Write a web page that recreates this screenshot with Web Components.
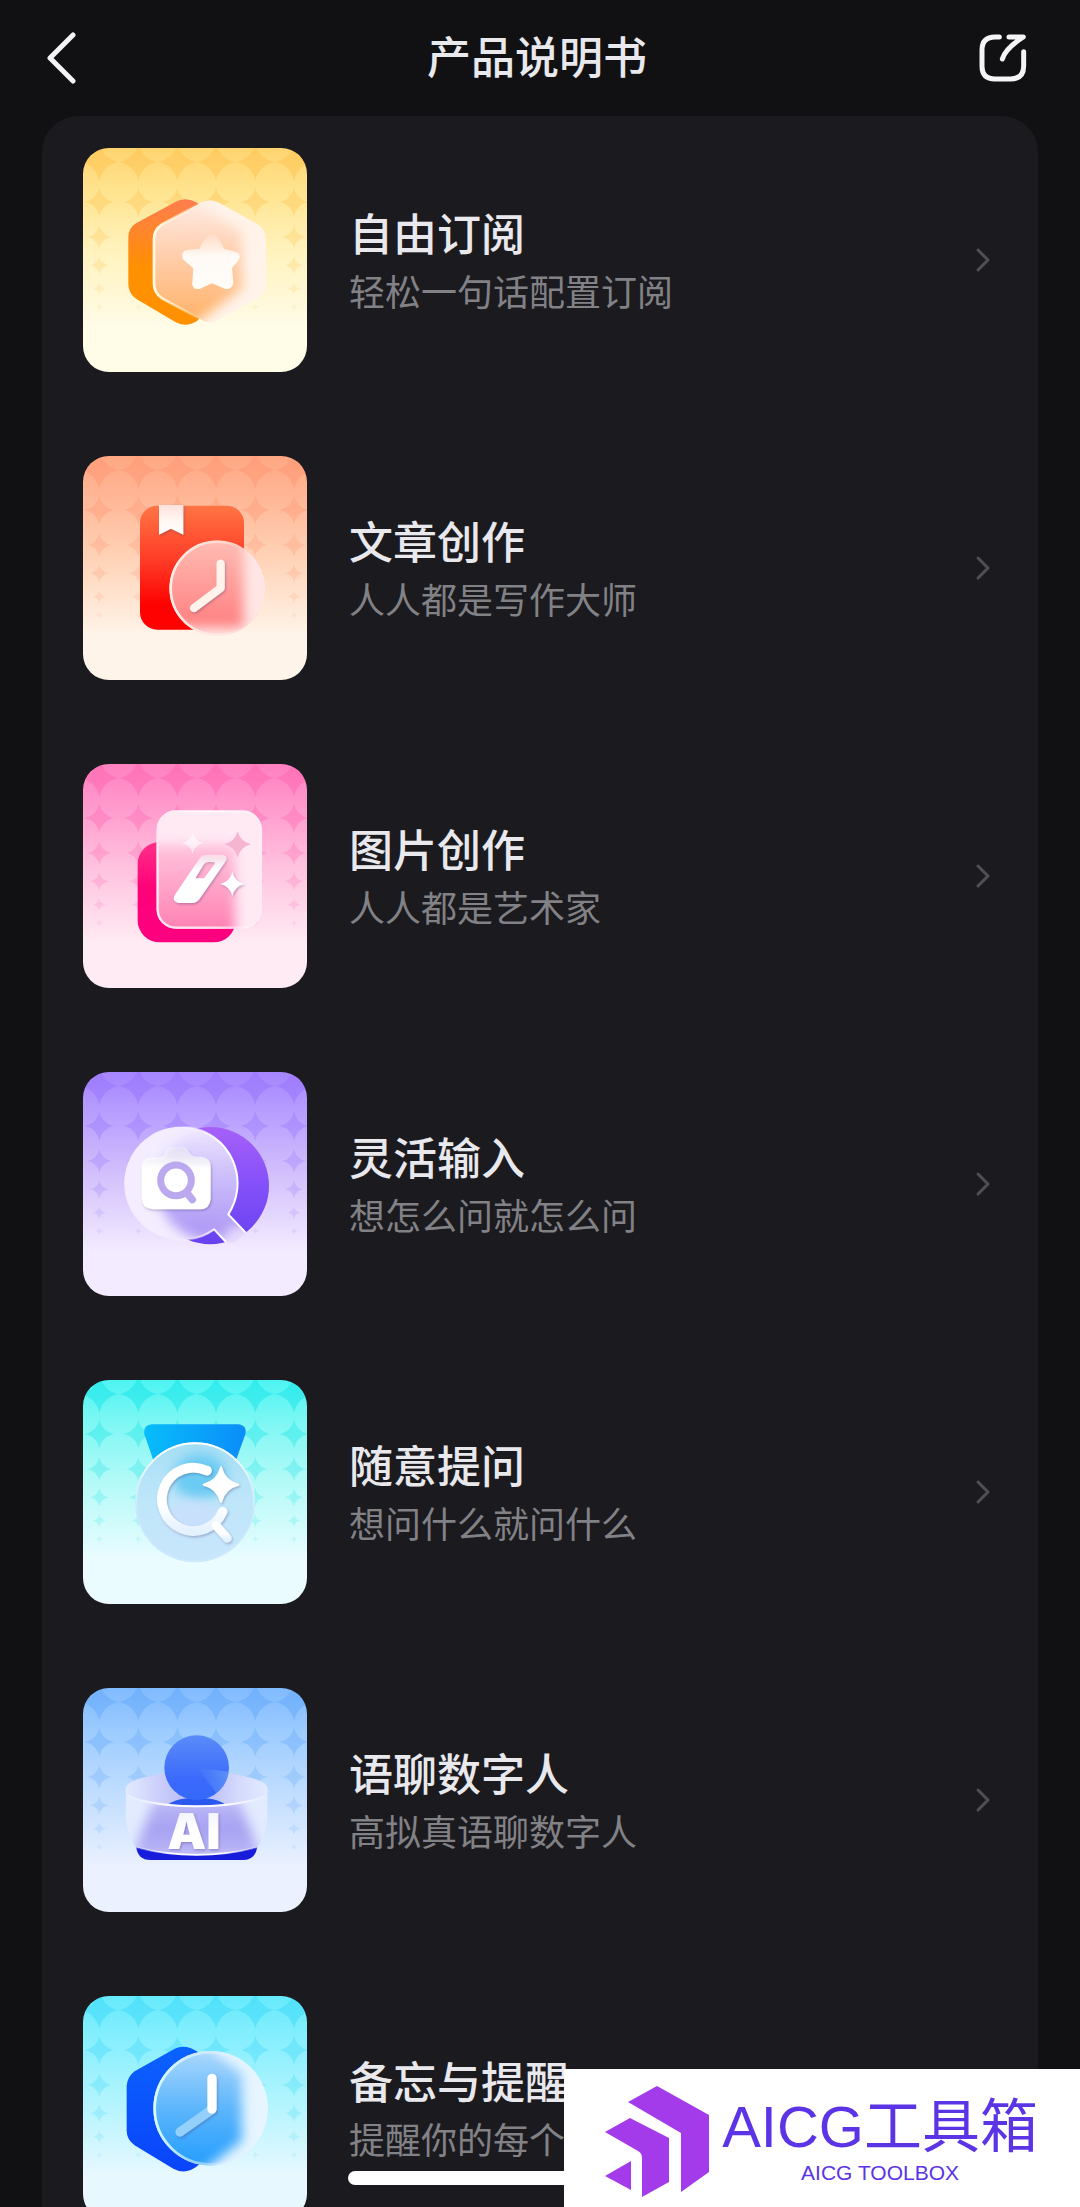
<!DOCTYPE html>
<html lang="zh-CN">
<head>
<meta charset="UTF-8">
<meta name="viewport" content="width=device-width, initial-scale=1">
<title>产品说明书</title>
<style>
  body {
    margin: 0;
    background: #111113;
    color: #e8e8ed;
    font-family: "Noto Sans CJK SC", sans-serif;
  }
</style>
</head>
<body>
<manual-page>
  <nav-bar slot="header">产品说明书</nav-bar>
  <feature-row icon="subscribe">自由订阅<span slot="desc">轻松一句话配置订阅</span></feature-row>
  <feature-row icon="article">文章创作<span slot="desc">人人都是写作大师</span></feature-row>
  <feature-row icon="image">图片创作<span slot="desc">人人都是艺术家</span></feature-row>
  <feature-row icon="input">灵活输入<span slot="desc">想怎么问就怎么问</span></feature-row>
  <feature-row icon="ask">随意提问<span slot="desc">想问什么就问什么</span></feature-row>
  <feature-row icon="avatar">语聊数字人<span slot="desc">高拟真语聊数字人</span></feature-row>
  <feature-row icon="remind">备忘与提醒<span slot="desc">提醒你的每个</span></feature-row>
  <brand-badge slot="overlay">AICG工具箱<span slot="sub">AICG TOOLBOX</span></brand-badge>
</manual-page>

<script>
// stars that stay visible between the overlapping dots of the tile background
const starColumns = [49, 166, 283, 399, 517, 633]
const starRows = [
  { y: 42, r: 58, o: 0.9 },
  { y: 162, r: 44, o: 0.7 },
  { y: 267, r: 36, o: 0.55 },
  { y: 352, r: 28, o: 0.45 },
  { y: 422, r: 19, o: 0.35 },
  { y: 477, r: 11, o: 0.25 },
]

const gapStar = (x, y, r) => {
  const arc = Math.round(r * 1.2)
  return `M${x} ${y - r}A${arc} ${arc} 0 0 0 ${x + r} ${y}A${arc} ${arc} 0 0 0 ${x} ${y + r}A${arc} ${arc} 0 0 0 ${x - r} ${y}A${arc} ${arc} 0 0 0 ${x} ${y - r}Z`
}

const sparkle = (x, y, r) => {
  const k = Math.round(r / 5)
  return `M${x} ${y - r}Q${x + k} ${y - k} ${x + r} ${y}Q${x + k} ${y + k} ${x} ${y + r}Q${x - k} ${y + k} ${x - r} ${y}Q${x - k} ${y - k} ${x} ${y - r}Z`
}

const gradient = (id, stops, direction = 'x1="0" y1="0" x2="0" y2="1"') =>
  `<linearGradient id="${id}" ${direction}>${stops
    .map(([offset, color, opacity = 1]) => `<stop offset="${offset}" stop-color="${color}" stop-opacity="${opacity}"/>`)
    .join("")}</linearGradient>`

const leftToRight = 'x1="0" y1="0" x2="1" y2="0"'

const icons = {
  subscribe: {
    top: 28,
    star: "#ffc04e",
    bg: ["#ffd470", "#ffe490", "#fff2bc", "#fffce8"],
    art: `
      <defs>
        ${gradient("back", [[0, "#ff7d4f"], [0.55, "#ff9000"], [1, "#ff9000"]])}
        ${gradient("tint", [[0, "#ffeae2"], [0.4, "#ffd0b0"], [1, "#ffb062"]])}
        ${gradient("rim", [[0, "#fffbe2"], [0.45, "#fffbe2", 0]], leftToRight)}
        ${gradient("star", [[0, "#fff", 0.1], [0.4, "#fff", 0.9], [1, "#fffdf8"]])}
        <clipPath id="glass"><path d="M397 190Q420 180 443 190L565 258Q588 274 588 300V435Q588 462 565 478L443 545Q420 558 397 545L275 478Q252 462 252 435V300Q252 274 275 258Z"/></clipPath>
      </defs>
      <path fill="url(#back)" d="M316 190Q348 172 382 192L420 240V500L382 546Q348 568 316 550L198 480Q175 464 175 436V296Q175 268 198 254Z"/>
      <g clip-path="url(#glass)">
        <rect x="240" y="170" width="360" height="390" fill="#fff3ea"/>
        <path filter="url(#soft)" fill="url(#tint)" d="M230 250L370 190L515 280V450L370 560L230 540Z"/>
      </g>
      <path fill="none" stroke="url(#rim)" stroke-width="8" d="M397 190Q420 180 443 190L565 258Q588 274 588 300V435Q588 462 565 478L443 545Q420 558 397 545L275 478Q252 462 252 435V300Q252 274 275 258Z"/>
      <path fill="url(#star)" d="M398 312Q426 260 453 312L462 330L498 340Q518 350 503 368L486 388L490 430Q488 456 464 450L426 434L388 451Q364 454 367 430L370 389L339 362Q330 338 352 334L388 330Z"/>`,
  },

  article: {
    top: 36,
    star: "#ff9470",
    bg: ["#ffa782", "#ffb898", "#ffd2b6", "#fff4e9"],
    art: `
      <defs>
        ${gradient("back", [[0, "#ff7544"], [0.45, "#ff3a26"], [0.8, "#fe0202"]])}
        ${gradient("mark", [[0, "#ffe0dc"], [0.5, "#fff6f2"], [1, "#fff"]])}
        ${gradient("tint", [[0, "#ffc4b8"], [0.55, "#ff9d9a"], [1, "#ff7f80"]])}
        ${gradient("rim", [[0, "#fff0e8"], [0.6, "#fff0e8", 0.5], [0.8, "#fff0e8", 0]], leftToRight)}
        <clipPath id="glass"><circle cx="442" cy="433" r="143"/></clipPath>
      </defs>
      <rect x="210" y="185" width="312" height="372" rx="52" fill="url(#back)"/>
      <path fill="url(#mark)" filter="url(#drop)" d="M267 183H340V272L303 254L267 272Z"/>
      <g clip-path="url(#glass)">
        <rect x="296" y="288" width="290" height="290" fill="#ffe6e4"/>
        <rect x="270" y="260" width="250" height="290" filter="url(#soft)" fill="url(#tint)"/>
      </g>
      <circle cx="442" cy="433" r="140" fill="none" stroke="url(#rim)" stroke-width="8"/>
      <path filter="url(#drop)" fill="none" stroke="#fff3ec" stroke-width="25" stroke-linecap="round" stroke-linejoin="round" d="M452 359V432L372 492"/>`,
  },

  image: {
    top: 28,
    star: "#ff62ae",
    bg: ["#ff80c0", "#ff9bcd", "#ffc0de", "#ffebf3"],
    art: `
      <defs>
        ${gradient("back", [[0, "#ff3088"], [0.45, "#fe0279"], [1, "#fe0080"]])}
        ${gradient("tint", [[0, "#ffc4dc"], [1, "#ff78ae"]])}
        ${gradient("rim", [[0, "#ffe6f2"], [0.6, "#fff", 0.7], [1, "#fff", 0.1]], leftToRight)}
        ${gradient("wand", [[0, "#fff", 0.5], [0.3, "#fff"], [1, "#fff"]])}
        <clipPath id="glass"><rect x="260" y="167" width="316" height="355" rx="58"/></clipPath>
      </defs>
      <rect x="203" y="262" width="294" height="301" rx="66" fill="url(#back)"/>
      <g clip-path="url(#glass)">
        <rect x="260" y="167" width="318" height="357" fill="#ffeaf4"/>
        <rect x="230" y="270" width="265" height="290" filter="url(#soft)" fill="url(#tint)"/>
      </g>
      <rect x="263" y="170" width="310" height="349" rx="55" fill="none" stroke="url(#rim)" stroke-width="7"/>
      <path filter="url(#drop)" fill="url(#wand)" fill-rule="evenodd" d="M412 300H455Q478 304 465 323L388 434Q380 445 366 445H326Q304 440 315 420L388 312Q397 300 412 300ZM414 322Q406 322 400 331L376 371H402L434 328Q437 322 430 322Z"/>
      <path fill="#f5b5d0" d="${sparkle(503, 269, 40)}"/>
      <path fill="#fff" filter="url(#drop)" d="${sparkle(487, 388, 36)}"/>
      <path fill="#fff" fill-opacity=".6" d="${sparkle(368, 265, 32)}"/>`,
  },

  input: {
    top: 38,
    star: "#9470fb",
    bg: ["#a685ff", "#b9a0ff", "#d2bffc", "#f3ebff"],
    art: `
      <defs>
        ${gradient("back", [[0, "#a660f8"], [0.5, "#8450fa"], [1, "#6842ee"]])}
        ${gradient("tint", [[0, "#ece4ff"], [0.4, "#cdbffb"], [1, "#ab94f5"]])}
        ${gradient("rim", [[0.4, "#fff", 0], [0.8, "#fff"]], leftToRight)}
        ${gradient("camera", [[0, "#fff", 0.3], [0.35, "#fff"], [1, "#fff"]])}
        <clipPath id="glass"><path d="M475 465L527 520L494 551L468 548L432 510A170 170 0 1 1 475 465Z"/></clipPath>
      </defs>
      <circle cx="421" cy="379" r="176" fill="url(#back)"/>
      <g clip-path="url(#glass)">
        <rect x="150" y="190" width="380" height="370" fill="#f3edff"/>
        <circle cx="425" cy="378" r="165" filter="url(#soft)" fill="url(#tint)"/>
        <path d="M462 520L500 500L540 530L500 565Z" filter="url(#soft)" fill="#e6dafb"/>
      </g>
      <path fill="none" stroke="url(#rim)" stroke-width="6" d="M468 548L432 510A170 170 0 1 1 475 465L527 520"/>
      <path filter="url(#drop)" fill="url(#camera)" d="M245 294H270Q282 292 287 276Q293 262 306 262H338Q350 262 355 274Q362 290 380 292H394Q422 294 422 322V418Q420 449 390 450H248Q216 448 215 416V324Q216 297 245 294Z"/>
      <circle cx="318" cy="363" r="46" fill="#fff" stroke="#bba8ee" stroke-width="21"/>
      <path stroke="#bba8ee" stroke-width="22" stroke-linecap="round" d="M350 400L367 421"/>`,
  },

  ask: {
    top: 29,
    star: "#12e2e6",
    bg: ["#4df4f2", "#80f7f4", "#b2faf7", "#eafcff"],
    art: `
      <defs>
        ${gradient("back", [[0, "#08bdfa"], [1, "#0b8dfa"]], leftToRight)}
        ${gradient("disc", [[0, "#a6dff5"], [0.5, "#bfe6fa"], [1, "#c8e6fc"]])}
        ${gradient("rim", [[0, "#fff"], [0.6, "#fff", 0.1]])}
        ${gradient("ring", [[0, "#fff"], [0.6, "#fff"], [1, "#e4f2ff"]])}
        <clipPath id="glass"><circle cx="375" cy="396" r="180"/></clipPath>
      </defs>
      <path fill="url(#back)" d="M245 162H503Q532 164 526 192L498 270H250L223 192Q218 165 245 162Z"/>
      <circle cx="375" cy="396" r="180" fill="url(#disc)"/>
      <g clip-path="url(#glass)">
        <ellipse cx="390" cy="320" rx="80" ry="70" filter="url(#soft)" fill="#6ccbf3"/>
        <ellipse cx="370" cy="440" rx="80" ry="50" filter="url(#soft)" fill="#c8e0fc"/>
      </g>
      <circle cx="375" cy="396" r="177" fill="none" stroke="url(#rim)" stroke-width="6"/>
      <g filter="url(#drop)" fill="none" stroke="url(#ring)" stroke-linecap="round">
        <path stroke-width="29" d="M411 301A95 95 0 1 0 458 424"/>
        <path stroke-width="26" d="M438 465L472 504"/>
      </g>
      <path fill="#fff" stroke="#fff" stroke-width="6" stroke-linejoin="round" filter="url(#drop)" d="${sparkle(453, 343, 52)}"/>`,
  },

  avatar: {
    top: 39,
    star: "#5fa6f8",
    bg: ["#80baff", "#9dccff", "#bedcff", "#ebf1ff"],
    art: `
      <defs>
        ${gradient("head", [[0, "#5a8cf8"], [0.7, "#3b69fc"], [1, "#3468f8"]])}
        ${gradient("shine", [[0, "#6fa6f4", 0], [1, "#6fa6f4", 0.6]], leftToRight)}
        ${gradient("top", [[0, "#e2ebff"], [0.2, "#cfd2fb"], [0.5, "#b1b5f6"], [0.8, "#d5dafc"], [1, "#e2ebff"]], leftToRight)}
        ${gradient("tint", [[0, "#c0bdf7"], [0.5, "#a6a1f2"], [1, "#bdb9f6"]])}
        ${gradient("rim", [[0, "#fff", 0.2], [0.3, "#fff"], [0.7, "#fff"], [1, "#fff", 0.2]], leftToRight)}
        ${gradient("word", [[0, "#eceeff"], [0.5, "#fff"], [1, "#fff"]])}
        <clipPath id="glass"><path d="M167 345A213 49 0 0 0 593 345V420Q590 480 562 517Q380 562 198 517Q170 480 167 420Z"/></clipPath>
        <clipPath id="inside"><path d="M167 200H593V345A213 49 0 0 1 167 345Z"/></clipPath>
      </defs>
      <ellipse cx="380" cy="342" rx="213" ry="52" fill="url(#top)"/>
      <g clip-path="url(#inside)">
        <ellipse cx="380" cy="396" rx="88" ry="28" fill="#2b58ee"/>
      </g>
      <circle cx="380" cy="278" r="97" fill="url(#head)"/>
      <path fill="url(#shine)" d="M380 278L476 290A97 97 0 0 1 440 354Z"/>
      <path fill="#181ddb" d="M198 512Q202 555 242 555H520Q558 553 562 512Z"/>
      <g clip-path="url(#glass)">
        <rect x="160" y="340" width="440" height="220" fill="#e2ebff"/>
        <path filter="url(#soft)" fill="url(#tint)" d="M255 370H505L575 550H185Z"/>
      </g>
      <path fill="none" stroke="url(#rim)" stroke-width="6" d="M167 345A213 49 0 0 0 593 345"/>
      <path fill="none" stroke="url(#rim)" stroke-width="5" d="M198 517Q380 562 562 517"/>
      <text x="292" y="522" filter="url(#drop)" fill="url(#word)" font-family="Inter, sans-serif" font-size="147" font-weight="900">AI</text>`,
  },

  remind: {
    top: 46,
    star: "#38d6f8",
    bg: ["#66eafc", "#88effe", "#aef4fe", "#e8f8ff"],
    art: `
      <defs>
        ${gradient("back", [[0, "#0b62ff"], [1, "#0a44fa"]])}
        ${gradient("tint", [[0, "#b4dcfc"], [0.5, "#5bb5fc"], [1, "#1c9afe"]])}
        ${gradient("rim", [[0, "#d8fbff"], [0.5, "#fff", 0.3], [0.7, "#fff", 0]], leftToRight)}
        <clipPath id="glass"><circle cx="422" cy="383" r="172"/></clipPath>
      </defs>
      <path fill="url(#back)" d="M314 204Q346 188 384 214L420 240V520L382 556Q348 584 310 564L194 494Q170 476 170 450V315Q172 288 194 272Z"/>
      <g clip-path="url(#glass)">
        <rect x="250" y="210" width="350" height="350" fill="#e6f5ff"/>
        <path filter="url(#soft)" fill="url(#tint)" d="M230 200L400 190L515 280V480L400 570L230 580Z"/>
      </g>
      <circle cx="422" cy="383" r="168" fill="none" stroke="url(#rim)" stroke-width="8"/>
      <g filter="url(#drop)" fill="none" stroke-width="28" stroke-linecap="round">
        <path stroke="#94d0fc" d="M425 387L330 454"/>
        <path stroke="#fff" d="M426 293V385"/>
      </g>`,
  },
}

class FeatureIcon extends HTMLElement {
  constructor() {
    super()
    this.attachShadow({ mode: "open" })
  }

  connectedCallback() {
    const icon = icons[this.getAttribute("name")]
    const [c0, c1, c2, c3] = icon.bg
    this.shadowRoot.innerHTML = `
    <style>
      :host {
        display: block;
        flex: none;
        width: 224px;
        height: 224px;
        border-radius: 26px;
        overflow: hidden;
      }

      svg {
        display: block;
        width: 100%;
        height: 100%;
      }
    </style>
    <svg viewBox="0 0 672 672" aria-hidden="true">
      <defs>
        ${gradient("bg", [[0, c0], [0.2, c1], [0.45, c2], [0.8, c3], [1, c3]])}
        <filter id="soft" x="-30%" y="-30%" width="160%" height="160%"><feGaussianBlur stdDeviation="17"/></filter>
        <filter id="drop" x="-30%" y="-30%" width="160%" height="160%"><feDropShadow dx="3" dy="4" stdDeviation="3" flood-color="#40306a" flood-opacity=".35"/></filter>
      </defs>
      <rect width="672" height="672" fill="url(#bg)"/>
      ${starRows
        .map(({ y, r, o }) => `<path fill="${icon.star}" opacity="${o / 2}" d="${starColumns.map((x) => gapStar(x, y, r)).join("")}"/>`)
        .join("")}
      <g transform="translate(-39 ${-icon.top})">${icon.art}</g>
    </svg>
  `
  }
}

class FeatureRow extends HTMLElement {
  constructor() {
    super()
    this.attachShadow({ mode: "open" })
    this.shadowRoot.innerHTML = `
    <style>
      :host {
        display: block;
      }

      a {
        display: flex;
        align-items: center;
        gap: 42px;
        color: inherit;
        text-decoration: none;
      }

      .text {
        flex: 1;
        min-width: 0;
      }

      .title {
        font-size: 44px;
        font-weight: 500;
        line-height: 60px;
      }

      .desc {
        color: #828286;
        font-size: 36px;
        line-height: 56px;
      }

      .arrow {
        flex: none;
        width: 16px;
        height: 26px;
      }
    </style>
    <a href="#${this.getAttribute("icon")}">
      <feature-icon name="${this.getAttribute("icon")}"></feature-icon>
      <div class="text">
        <div class="title"><slot></slot></div>
        <div class="desc"><slot name="desc"></slot></div>
      </div>
      <svg class="arrow" viewBox="0 0 16 26" aria-hidden="true">
        <path d="M3 3L13 13L3 23" fill="none" stroke="#505054" stroke-width="3" stroke-linecap="round" stroke-linejoin="round"/>
      </svg>
    </a>
  `
  }
}

class NavBar extends HTMLElement {
  constructor() {
    super()
    this.attachShadow({ mode: "open" })
    this.shadowRoot.innerHTML = `
    <style>
      :host {
        display: flex;
        align-items: center;
        justify-content: space-between;
        height: 116px;
        padding: 0 52px 0 46px;
      }

      h1 {
        margin: 0 0 6px;
        font-size: 44px;
        font-weight: 500;
        line-height: 60px;
      }

      button {
        display: flex;
        width: 52px;
        height: 52px;
        padding: 0;
        border: 0;
        background: none;
        color: #f4f4f6;
        cursor: pointer;
      }

      svg {
        width: 52px;
        height: 52px;
      }
    </style>
    <button aria-label="返回">
      <svg viewBox="0 0 52 52"><path d="M27 3L4 26L27 49" fill="none" stroke="currentColor" stroke-width="5" stroke-linecap="round" stroke-linejoin="round"/></svg>
    </button>
    <h1><slot></slot></h1>
    <button aria-label="分享">
      <svg viewBox="108 96 156 156">
        <path d="M178 111H165Q126 111 126 150V198Q126 237 165 237H212Q251 237 251 198V155M207 111H250Q196 146 187 177" fill="none" stroke="currentColor" stroke-width="15" stroke-linecap="round" stroke-linejoin="round"/>
      </svg>
    </button>
  `
  }
}

class BrandBadge extends HTMLElement {
  constructor() {
    super()
    this.attachShadow({ mode: "open" })
    this.shadowRoot.innerHTML = `
    <style>
      :host {
        display: flex;
        align-items: center;
        gap: 10px;
        box-sizing: border-box;
        height: 138px;
        padding: 6px 42px 0 40px;
        background: #fff;
        color: #5b34e6;
        font-family: "Liberation Sans", "Noto Sans CJK SC", sans-serif;
        text-align: center;
        white-space: nowrap;
      }

      svg {
        width: 108px;
        height: 114px;
      }

      .name {
        font-size: 58px;
        line-height: 64px;
      }

      .sub {
        font-size: 21px;
        line-height: 28px;
      }
    </style>
    <svg viewBox="604 2084 108 114" aria-hidden="true">
      <g fill="#a33bea">
        <path d="M657 2086L628 2102L681 2133V2192L709 2172V2115Z"/>
        <path d="M630 2118L605 2132L638 2151Q642 2153 642 2158V2197L669 2182V2138Z"/>
        <path d="M631 2161L605 2176L631 2190Z"/>
      </g>
    </svg>
    <div>
      <div class="name"><slot></slot></div>
      <div class="sub"><slot name="sub"></slot></div>
    </div>
  `
  }
}

class ManualPage extends HTMLElement {
  constructor() {
    super()
    this.attachShadow({ mode: "open" })
    this.shadowRoot.innerHTML = `
    <style>
      :host {
        display: flex;
        flex-direction: column;
        height: 100vh;
        overflow: hidden;
      }

      main {
        flex: 1;
        min-height: 0;
        margin: 0 42px;
        overflow-y: auto;
        scrollbar-width: none;
        background: #1b1a1f;
        border-radius: 36px 36px 0 0;
      }

      .list {
        display: flex;
        flex-direction: column;
        gap: 84px;
        padding: 32px 47px 84px 41px;
      }

      /* home indicator and badge float over the list */
      .home {
        position: fixed;
        bottom: 22px;
        left: 50%;
        width: 384px;
        height: 14px;
        margin-left: -192px;
        border-radius: 7px;
        background: #fff;
      }

      .overlay {
        position: fixed;
        right: 0;
        bottom: 0;
      }
    </style>
    <slot name="header"></slot>
    <main><div class="list"><slot></slot></div></main>
    <div class="home"></div>
    <div class="overlay"><slot name="overlay"></slot></div>
  `
  }
}

customElements.define("feature-icon", FeatureIcon)
customElements.define("feature-row", FeatureRow)
customElements.define("nav-bar", NavBar)
customElements.define("brand-badge", BrandBadge)
customElements.define("manual-page", ManualPage)
</script>
</body>
</html>
